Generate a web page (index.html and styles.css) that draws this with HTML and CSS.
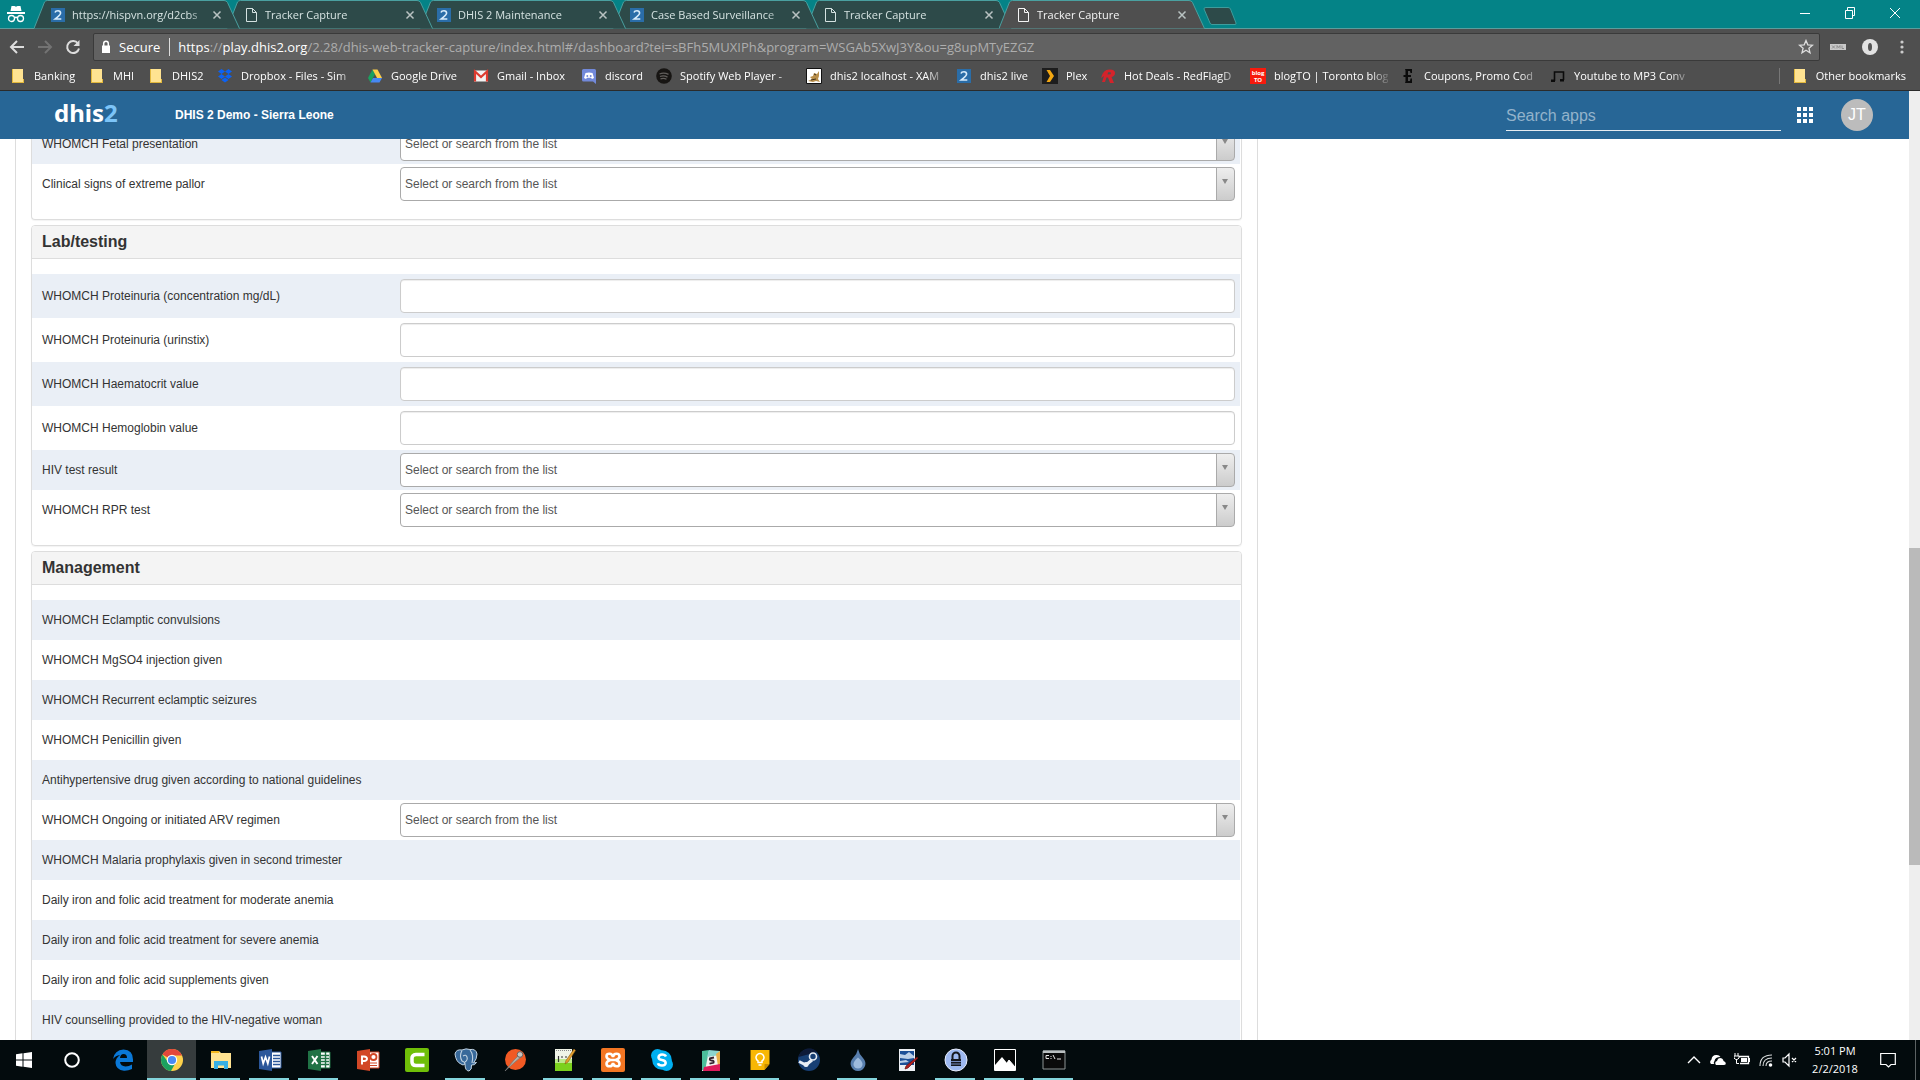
FILE: index.html
```html
<!DOCTYPE html>
<html lang="en">
<head>
<meta charset="utf-8">
<title>Tracker Capture</title>
<link rel="stylesheet" href="styles.css">
</head>
<body>
<svg class="defs" aria-hidden="true">
  <symbol id="tab-shape" viewBox="0 0 206 29" preserveAspectRatio="none"><path d="M0 28.500 L10.500 2 Q11.500 .5 13.500 .5 H190 Q192.500 .5 193.500 2.500 L205.500 28.500"/></symbol>
  <symbol id="page" viewBox="0 0 16 16"><path d="M3.500 1.500h6l4 4v9h-10zM9.500 1.500v4h4" fill="none" stroke="currentColor"/></symbol>
  <symbol id="dhis" viewBox="0 0 16 16"><path fill="#2a6da8" d="M1 1h14v14H1z"/><path d="M5 5.500Q5.500 3.800 8 3.800t2.600 2.300Q10.600 8 5.300 12h6" fill="none" stroke="#d8ecfb" stroke-width="1.600"/></symbol>
  <symbol id="folder" viewBox="0 0 16 16"><path fill="#ffe391" d="M2 1h11v10h1v4H2z"/><path fill="#e3b93d" d="M2 14h12v1H2zM13 11h1v4h-1zM2 1h1v14H2z"/></symbol>
  <symbol id="close" viewBox="0 0 10 10"><path d="M1.500 1.500l7 7M8.500 1.500l-7 7" fill="none" stroke="currentColor" stroke-width="1.500"/></symbol>
</svg>

<header class="browser">
  <div class="tabstrip">
    <svg class="incognito" viewBox="0 0 18 18" fill="#fff"><path d="M4.500 1h3l1.500.7L10.500 1h3l1 5h-11zM0 7h18v2H0z"/><g fill="none" stroke="#fff" stroke-width="1.300"><circle cx="4.500" cy="13.500" r="3"/><circle cx="13.500" cy="13.500" r="3"/><path d="M7.500 13q1.500-1.500 3 0"/></g></svg>
    <nav class="tabs">
      <button class="tab"><svg class="tab-bg"><use href="#tab-shape"/></svg><svg class="ico"><use href="#dhis"/></svg><span class="tab-title">https://hispvn.org/d2cbs</span><svg class="x"><use href="#close"/></svg></button>
      <button class="tab"><svg class="tab-bg"><use href="#tab-shape"/></svg><svg class="ico"><use href="#page"/></svg><span class="tab-title">Tracker Capture</span><svg class="x"><use href="#close"/></svg></button>
      <button class="tab"><svg class="tab-bg"><use href="#tab-shape"/></svg><svg class="ico"><use href="#dhis"/></svg><span class="tab-title">DHIS 2 Maintenance</span><svg class="x"><use href="#close"/></svg></button>
      <button class="tab"><svg class="tab-bg"><use href="#tab-shape"/></svg><svg class="ico"><use href="#dhis"/></svg><span class="tab-title">Case Based Surveillance</span><svg class="x"><use href="#close"/></svg></button>
      <button class="tab"><svg class="tab-bg"><use href="#tab-shape"/></svg><svg class="ico"><use href="#page"/></svg><span class="tab-title">Tracker Capture</span><svg class="x"><use href="#close"/></svg></button>
      <button class="tab active"><svg class="tab-bg"><use href="#tab-shape"/></svg><svg class="ico"><use href="#page"/></svg><span class="tab-title">Tracker Capture</span><svg class="x"><use href="#close"/></svg></button>
      <button class="new-tab" aria-label="New tab"><svg viewBox="0 0 34 18"><path d="M3 .5h22q2 0 2.500 1.500l5.500 14q.4 1.500-1 1.500H9q-1.500 0-2-1.500L1 2Q.6.500 3 .5z" fill="#2d4a49" stroke="#3f9c9c"/></svg></button>
    </nav>
    <div class="window-buttons">
      <button aria-label="Minimize"><svg viewBox="0 0 12 12"><path d="M1 6.500h10"/></svg></button>
      <button aria-label="Restore"><svg viewBox="0 0 12 12"><path d="M1.500 3.500h7v8h-7zM3.500 3V.5h7v8H9"/></svg></button>
      <button aria-label="Close"><svg viewBox="0 0 12 12"><path d="M1 1l10 10M11 1L1 11"/></svg></button>
    </div>
  </div>

  <div class="toolbar">
    <button aria-label="Back"><svg viewBox="0 0 16 16"><path d="M15 8H2M8 2L2 8l6 6"/></svg></button>
    <button aria-label="Forward" class="dim"><svg viewBox="0 0 16 16"><path d="M1 8h13M8 2l6 6-6 6"/></svg></button>
    <button aria-label="Reload"><svg viewBox="0 0 16 16"><path d="M13 4.500A6 6 0 1 0 14 9.500"/><path d="M14.500 1v6h-6z" fill="currentColor" stroke="none"/></svg></button>
    <div class="omnibox">
      <svg class="lock" viewBox="0 0 10 14"><path d="M1 5.500h8V13H1z" fill="#fff"/><path d="M2.700 6V3.500a2.300 2.300 0 0 1 4.600 0V6" fill="none" stroke="#fff" stroke-width="1.500"/></svg>
      <span class="secure">Secure</span>
      <span class="url"><b>https</b>://<b>play.dhis2.org</b>/2.28/dhis-web-tracker-capture/index.html#/dashboard?tei=sBFh5MUXIPh&amp;program=WSGAb5XwJ3Y&amp;ou=g8upMTyEZGZ</span>
      <svg class="star" viewBox="0 0 16 16"><path d="M8 1.500l1.800 4.300 4.700.4-3.600 3 1.100 4.600L8 11.300l-4 2.500 1.100-4.600-3.600-3 4.700-.4z" fill="none" stroke="#ddd" stroke-width="1.300"/></svg>
    </div>
    <svg class="ext" viewBox="0 0 16 16"><path fill="#c9c9c9" d="M0 5h16v6H0z"/><path d="M2 6.500l3 3M5 6.500l-3 3M7 9.500v-3l1.500 2 1.500-2v3M12 6.500v3h2" fill="none" stroke="#8e8e8e"/></svg>
    <svg class="ext" viewBox="0 0 16 16"><circle cx="8" cy="8" r="8" fill="#e2e2e2"/><ellipse cx="8" cy="8" rx="2" ry="4" fill="#555"/></svg>
    <svg class="ext" viewBox="0 0 16 16" fill="#ccc"><circle cx="8" cy="3" r="1.600"/><circle cx="8" cy="8" r="1.600"/><circle cx="8" cy="13" r="1.600"/></svg>
  </div>

  <nav class="bookmarks">
    <a href="#"><svg class="ico"><use href="#folder"/></svg><span>Banking</span></a>
    <a href="#"><svg class="ico"><use href="#folder"/></svg><span>MHI</span></a>
    <a href="#"><svg class="ico"><use href="#folder"/></svg><span>DHIS2</span></a>
    <a href="#"><svg class="ico" viewBox="0 0 16 16" fill="#0b62f5"><path d="M4.500 1L8 3.500 4.500 6 1 3.500zM11.500 1L15 3.500 11.500 6 8 3.500zM4.500 6L8 8.500 4.500 11 1 8.500zM11.500 6L15 8.500 11.500 11 8 8.500zM8 9.500l3.500 2.500L8 14.500 4.500 12z"/></svg><span>Dropbox - Files - Sim</span></a>
    <a href="#"><svg class="ico" viewBox="0 0 16 16"><path d="M5.500 1.500L8 6 3.500 14.500 1 10z" fill="#1aa15f"/><path d="M5.500 1.500h5L15 10h-5z" fill="#ffd04b"/><path d="M6 10h9l-2.500 4.500h-9z" fill="#4688f4"/></svg><span>Google Drive</span></a>
    <a href="#"><svg class="ico" viewBox="0 0 16 16"><path d="M1 2.500h14v11H1z" fill="#f2f2f2"/><path d="M2 13.500V3.500l6 5.500 6-5.500v10" fill="none" stroke="#dd3b30" stroke-width="2.200"/></svg><span>Gmail - Inbox</span></a>
    <a href="#"><svg class="ico" viewBox="0 0 16 16"><path d="M2.500 1h11Q15 1 15 2.500V16l-3-2.500H2.500Q1 13.500 1 12V2.500Q1 1 2.500 1z" fill="#7289da"/><path d="M4.500 5Q8 4 11.500 5L13 10l-2 1-1-1.200H6L5 11l-2-1z" fill="#fff"/><circle cx="6.300" cy="8" r="1" fill="#7289da"/><circle cx="9.700" cy="8" r="1" fill="#7289da"/></svg><span>discord</span></a>
    <a href="#"><svg class="ico" viewBox="0 0 16 16"><circle cx="8" cy="8" r="7.800" fill="#171513"/><path d="M3.500 6Q8 4.200 12.500 6.400M4 8.500q4-1.300 7.500.6M4.500 10.800q3.500-1 6 .5" fill="none" stroke="#625f5c" stroke-width="1.300"/></svg><span>Spotify Web Player -</span></a>
    <a href="#"><svg class="ico" viewBox="0 0 16 16"><path d="M.5.500h15v15H.5z" fill="#fff" stroke="#111"/><path d="M2 13l4-2-2-2 3-1 1-3 3 1 2-3v5l-1 3 2 3-4-1-3 1z" fill="#b98f4b"/><path d="M8 6l2 1M5 12l5-1" stroke="#3e3320"/></svg><span>dhis2 localhost - XAM</span></a>
    <a href="#"><svg class="ico"><use href="#dhis"/></svg><span>dhis2 live</span></a>
    <a href="#"><svg class="ico" viewBox="0 0 16 16"><path fill="#1d1d1d" d="M0 0h16v16H0z"/><path d="M4.500 2H8l4 6-4 6H4.500l3.500-6z" fill="#f3a712"/></svg><span>Plex</span></a>
    <a href="#"><svg class="ico" viewBox="0 0 16 16"><path d="M1 10Q3 1 10 1.500q5 0 5 3.500 0 3-3.500 4L14 15h-4L8 9.500H6.500L5 14H2l2-6z" fill="#d4232b"/><path d="M7.500 6.500l.7-2.300h2q1.500.5.300 2z" fill="#505050"/></svg><span>Hot Deals - RedFlagD</span></a>
    <a href="#"><svg class="ico blogto" viewBox="0 0 16 16"><path fill="#f71a0d" d="M0 0h16v16H0z"/><text x="8" y="7" text-anchor="middle">blog</text><text x="8" y="14" text-anchor="middle">TO</text></svg><span>blogTO | Toronto blog</span></a>
    <a href="#"><svg class="ico" viewBox="0 0 16 16"><path d="M5 1h7v4h-1.500L10 3H8v4h3v2H8v4h2l.5-2.500H12V15H5l.5-1.500V9H3.500V7h2V2.500z" fill="#0b0b0b"/></svg><span>Coupons, Promo Cod</span></a>
    <a href="#"><svg class="ico" viewBox="0 0 16 16"><path d="M4.500 13V4h9v8" fill="none" stroke="#0b0b0b" stroke-width="1.600"/><path d="M1 11.500h4V14H1zM10 11h4v2.500h-4z" fill="#0b0b0b"/></svg><span>Youtube to MP3 Conv</span></a>
    <a href="#" class="other"><svg class="ico"><use href="#folder"/></svg><span>Other bookmarks</span></a>
  </nav>
</header>

<div class="viewport">
  <div class="page">
    <header class="appbar">
      <a class="logo" href="#">dhis<span>2</span></a>
      <strong class="instance">DHIS 2 Demo - Sierra Leone</strong>
      <input class="search" type="text" placeholder="Search apps" aria-label="Search apps">
      <button class="apps" aria-label="Apps"><svg viewBox="0 0 16 16" fill="#fff"><path d="M0 0h4v4H0zM6 0h4v4H6zM12 0h4v4h-4zM0 6h4v4H0zM6 6h4v4H6zM12 6h4v4h-4zM0 12h4v4H0zM6 12h4v4H6zM12 12h4v4h-4z"/></svg></button>
      <button class="avatar">JT</button>
    </header>

    <main class="dashboard">
      <form class="widget">
        <section class="panel continued">
          <div class="row"><label for="f1">WHOMCH Fetal presentation</label><span class="pick"><select id="f1"><option>Select or search from the list</option></select></span></div>
          <div class="row"><label for="f2">Clinical signs of extreme pallor</label><span class="pick"><select id="f2"><option>Select or search from the list</option></select></span></div>
        </section>

        <section class="panel">
          <h2>Lab/testing</h2>
          <div class="row"><label for="f3">WHOMCH Proteinuria (concentration mg/dL)</label><input id="f3" type="text"></div>
          <div class="row"><label for="f4">WHOMCH Proteinuria (urinstix)</label><input id="f4" type="text"></div>
          <div class="row"><label for="f5">WHOMCH Haematocrit value</label><input id="f5" type="text"></div>
          <div class="row"><label for="f6">WHOMCH Hemoglobin value</label><input id="f6" type="text"></div>
          <div class="row"><label for="f7">HIV test result</label><span class="pick"><select id="f7"><option>Select or search from the list</option></select></span></div>
          <div class="row"><label for="f8">WHOMCH RPR test</label><span class="pick"><select id="f8"><option>Select or search from the list</option></select></span></div>
        </section>

        <section class="panel">
          <h2>Management</h2>
          <div class="row"><span>WHOMCH Eclamptic convulsions</span></div>
          <div class="row"><span>WHOMCH MgSO4 injection given</span></div>
          <div class="row"><span>WHOMCH Recurrent eclamptic seizures</span></div>
          <div class="row"><span>WHOMCH Penicillin given</span></div>
          <div class="row"><span>Antihypertensive drug given according to national guidelines</span></div>
          <div class="row"><label for="f9">WHOMCH Ongoing or initiated ARV regimen</label><span class="pick"><select id="f9"><option>Select or search from the list</option></select></span></div>
          <div class="row"><span>WHOMCH Malaria prophylaxis given in second trimester</span></div>
          <div class="row"><span>Daily iron and folic acid treatment for moderate anemia</span></div>
          <div class="row"><span>Daily iron and folic acid treatment for severe anemia</span></div>
          <div class="row"><span>Daily iron and folic acid supplements given</span></div>
          <div class="row"><span>HIV counselling provided to the HIV-negative woman</span></div>
        </section>
      </form>
    </main>
  </div>
  <div class="scrollbar"><div class="thumb"></div></div>
</div>

<footer class="taskbar">
  <button class="sys" aria-label="Start"><svg class="i16" viewBox="0 0 16 16" fill="#fff"><path d="M0 2.300L6.500 1.300V7.500H0zM7.500 1.200L16 0v7.500H7.500zM0 8.500h6.500v6.200L0 13.700zM7.500 8.500H16V16l-8.500-1.200z"/></svg></button>
  <button class="sys" aria-label="Cortana"><svg class="i16" viewBox="0 0 16 16"><circle cx="8" cy="8" r="6.800" fill="none" stroke="#fff" stroke-width="2"/></svg></button>
  <nav class="tasks">
    <button aria-label="Edge"><svg viewBox="0 0 24 24"><path d="M2 11Q3.500 2 12.500 1.500 22 2 22 11.500V14H9q.5 4 5.500 4.500 3.500 0 6.500-2v4.500q-4 2-8 1.800Q5 22 4.500 15 4.500 10 9 7q-4.500.5-7 4zM9 10h7q0-4-3.500-4Q9.500 6 9 10z" fill="#0a78d7"/></svg></button>
    <button aria-label="Chrome" class="open current"><svg viewBox="0 0 24 24"><circle cx="12" cy="12" r="11" fill="#fdd14b"/><path d="M12 12L2.500 6.500A11 11 0 0 1 22 7.500H12z" fill="#e2473b"/><path d="M2.500 6.500A11 11 0 0 0 11 23l5-9-4-2-4 2z" fill="#1ba160"/><circle cx="12" cy="12" r="5.200" fill="#fff"/><circle cx="12" cy="12" r="4.100" fill="#4a8af4"/></svg></button>
    <button aria-label="File Explorer" class="open"><svg viewBox="0 0 24 24"><path d="M2 3h8l2 2h10v15H2z" fill="#ffe391"/><path d="M2 3h8v2H2z" fill="#f4b81e"/><path d="M5 13h14v8h-4v-3.500H9V21H5z" fill="#37b0e5"/></svg></button>
    <button aria-label="Word" class="open"><svg viewBox="0 0 24 24"><path d="M13 4h10v16H13z" fill="#fff" stroke="#2b579a"/><path d="M15 7.500h7M15 10.500h7M15 13.500h7M15 16.500h7" stroke="#2b579a" stroke-width="1.500"/><path d="M1 3l13-2v22L1 21z" fill="#2b579a"/><path d="M3.500 8.500L5.200 15.500 7.500 9l2.300 6.500 1.700-7" fill="none" stroke="#fff" stroke-width="1.700"/></svg></button>
    <button aria-label="Excel" class="open"><svg viewBox="0 0 24 24"><path d="M13 4h10v16H13z" fill="#fff" stroke="#207245"/><path d="M14 7.500h8M14 10.500h8M14 13.500h8M14 16.500h8M18.500 4v16" stroke="#207245" stroke-width="1.400"/><path d="M1 3l13-2v22L1 21z" fill="#207245"/><path d="M5 8l5.500 8M10.500 8L5 16" stroke="#fff" stroke-width="1.900"/></svg></button>
    <button aria-label="PowerPoint"><svg viewBox="0 0 24 24"><path d="M13 4h10v16H13z" fill="#fff" stroke="#d24726"/><path d="M14 15h7M14 17.500h7" stroke="#d24726"/><circle cx="17.500" cy="9" r="3" fill="none" stroke="#d24726" stroke-width="1.800"/><path d="M1 3l13-2v22L1 21z" fill="#d24726"/><path d="M6 16.500V8.500h2q3 .2 3 2.300T8 13H6" fill="none" stroke="#fff" stroke-width="1.900"/></svg></button>
    <button aria-label="Camtasia"><svg viewBox="0 0 24 24"><rect width="24" height="24" rx="2" fill="#6fbf08"/><path d="M19.500 6.500H11Q7 7 7 10v4q0 3.500 4 3.500h8.500" fill="none" stroke="#fff" stroke-width="3.500"/></svg></button>
    <button aria-label="pgAdmin" class="open"><svg viewBox="0 0 24 24"><path d="M1 6Q2 1 8 2q4-2 8-.5 6-1 7 4.500 0 5-3.500 9l3-.5q-1.500 3-5 2.500Q18 22 15 23q-4 0-4-7-2 2-4 0Q2 14 1 6z" fill="#38699a" stroke="#c2d3e2"/><path d="M8 2.500Q5 8 8 13q3 1 3 3M16 2q4 5 2 13M9 8q3-2 4 1t-2 5" fill="none" stroke="#c2d3e2" stroke-width="1.100"/></svg></button>
    <button aria-label="Postman"><svg viewBox="0 0 24 24"><circle cx="12.500" cy="11.500" r="10.500" fill="#f15a24"/><path d="M2 23l9-11 5-5 2 2-6 5z" fill="#b9b0a4" stroke="#777" stroke-width=".7"/><circle cx="17" cy="6.500" r="2.800" fill="#c9c6c0" stroke="#666"/></svg></button>
    <button aria-label="Notepad++" class="open"><svg viewBox="0 0 24 24"><path d="M3 1h17v22H3z" fill="#f0f4e8"/><path d="M3 14h17v9H3z" fill="#7bd11d"/><path d="M3 11h17v4H3z" fill="#bde98b"/><path d="M6.500 8v6M9 9h2M13 9h2" stroke="#333" stroke-width="1.200"/><path d="M4 2.500h15" stroke="#888" stroke-dasharray="1 1"/><path d="M22 1l1.500 1.500L16 14l-3 2 1-3.500z" fill="#e5a030" stroke="#8a5a14" stroke-width=".6"/></svg></button>
    <button aria-label="XAMPP" class="open"><svg viewBox="0 0 24 24"><rect width="24" height="24" rx="2" fill="#f37623"/><path d="M9.500 12H14.500M9.500 12Q5.500 11 5.500 8.300T8.500 5.700 12 9q.5-3.300 3.500-3.300t3 2.600-4 3.700q4 1 4 3.700t-3 2.600T12 15q-.5 3.300-3.500 3.300t-3-2.600 4-3.700z" fill="none" stroke="#fff" stroke-width="2.600"/></svg></button>
    <button aria-label="Skype" class="open"><svg viewBox="0 0 24 24"><circle cx="7.500" cy="7.500" r="6.500" fill="#00aff0"/><circle cx="16.500" cy="16.500" r="6.500" fill="#00aff0"/><circle cx="12" cy="12" r="9.800" fill="#00aff0"/><path d="M16 8.500Q15 6.500 12 6.500t-3.500 2.700Q8.500 11.500 12 12t3.700 3Q15.500 17.500 12 17.500T8 15.300" fill="none" stroke="#fff" stroke-width="2.500"/></svg></button>
    <button aria-label="Slack" class="open"><svg viewBox="0 0 24 24"><path d="M3 3h18v20H3z" fill="#f5f5f0"/><path d="M3 3l7-1-4 21-3-1z" fill="#4bbf9b"/><path d="M10 2l11 1v4L8 9z" fill="#8bd4ce"/><path d="M17 6l4-3v14l-2 1z" fill="#e8b04b"/><path d="M5 19l16-3v7H4z" fill="#dd1b5b"/><path d="M15 9.500l-4 .8q-1 2 1.500 2.200 3 0 2 2.300l-4 .8" fill="none" stroke="#33222f" stroke-width="1.800"/></svg></button>
    <button aria-label="Keep" class="open"><svg viewBox="0 0 24 24"><path d="M2.500 2h19v14l-5 6h-14z" fill="#f8b704"/><path d="M21.500 16h-5v6z" fill="#c78d00"/><path d="M10 14.500V13a4 4 0 1 1 4 0v1.500zM10.500 17h3" fill="none" stroke="#fff" stroke-width="1.500"/></svg></button>
    <button aria-label="Steam"><svg viewBox="0 0 24 24"><circle cx="12" cy="12" r="11" fill="#173f74"/><path d="M1 12A11 11 0 0 1 20 4L1.500 9z" fill="#0d1a38"/><path d="M2 13.500l7 3.500 6-5" fill="none" stroke="#e8eef5" stroke-width="3"/><circle cx="16" cy="8.500" r="3.500" fill="none" stroke="#e8eef5" stroke-width="1.600"/><circle cx="9" cy="16.500" r="2.500" fill="#e8eef5"/></svg></button>
    <button aria-label="Drop" class="open"><svg viewBox="0 0 24 24"><path d="M12 1Q13 6 17 10q3.500 4 2 8-2 5-7 5t-7-5q-1.500-4 2-8 4-4 5-9z" fill="#587fae"/><path d="M12 9.500q5 4 4.500 7.500-1 3.500-4.500 3.500T7.500 17Q7 13.500 12 9.500z" fill="#9dbbdd"/></svg></button>
    <button aria-label="Paint"><svg viewBox="0 0 24 24"><path d="M4 1h16v22H4z" fill="#eef1f5"/><path d="M5 3h14v14H5z" fill="#1c4f97"/><path d="M5 6l5 1 4-3 5 4v2l-6 1-8-1zM5 13l6-1 3 2-9 1z" fill="#bcd0e8"/><path d="M22 9l1 1-10 10-3 1 1-3z" fill="#b12020" stroke="#601010" stroke-width=".7"/></svg></button>
    <button aria-label="KeePass" class="open"><svg viewBox="0 0 24 24"><circle cx="12" cy="12" r="11" fill="#9db8f0" stroke="#e8eefc"/><path d="M7 11h10v7H7z" fill="#15171d"/><path d="M8.500 11V8a3.500 3.500 0 0 1 7 0v3" fill="none" stroke="#15171d" stroke-width="2"/><path d="M7 13.500h10M7 16h10" stroke="#8aa7e8" stroke-width=".8"/></svg></button>
    <button aria-label="Photos" class="open"><svg viewBox="0 0 24 24"><path d="M1.500 1.500h21v21h-21z" fill="#050808" stroke="#fff"/><path d="M2 22v-5l7-8 5 6 2-2 6 6v3z" fill="#fff"/><path d="M14 15l2-3 6 7" stroke="#fff" fill="#fff"/></svg></button>
    <button aria-label="Command Prompt" class="open"><svg viewBox="0 0 24 24"><path d="M1 3h22v18H1z" fill="#0a0a0a" stroke="#8d9494"/><path d="M1 2.500h22V5H1z" fill="#b9bfc0"/><path d="M4 7.500h3M4 7.500v3h3M9 8v1M9 10v1M11 7l2 4M15 11h4" stroke="#e5e5e5" fill="none"/></svg></button>
  </nav>
  <div class="tray">
    <svg viewBox="0 0 16 16"><path d="M2 11l6-6 6 6" fill="none" stroke="#fff" stroke-width="1.400"/></svg>
    <svg viewBox="0 0 16 16" fill="#fff"><path d="M1 12Q-1 10 1.500 7.500 2 3 6 3q3-.5 4.500 2Q5 5 4.500 9 3 11 4.500 12zM6 13q-2-3 1-4 1-4 5-2.500 1.500 1 1.500 2.500 3 1 2 3.500L14 13z"/></svg>
    <svg viewBox="0 0 16 16"><path d="M5 4.500h9.500v7H6M15.500 6v4" fill="none" stroke="#fff" stroke-width="1.300"/><path d="M7 6h6v4H7z" fill="#fff"/><path d="M1 1v3M4 1v3M0 4h5v2Q4 7.500 2.500 7.500T0 6zM2.500 7v4.500H5" fill="none" stroke="#fff"/></svg>
    <svg viewBox="0 0 16 16"><path d="M2 14Q2 3 14 3M5 14q0-8 9-8M8 14q0-5 6-5" fill="none" stroke="#d9dcdc" stroke-width="1.100"/><circle cx="12.500" cy="13" r="1.800" fill="#fff"/></svg>
    <svg viewBox="0 0 16 16"><path d="M1 6h2l4-4v12l-4-4H1zM10 6l4 4M14 6l-4 4" fill="none" stroke="#fff" stroke-width="1.200"/></svg>
  </div>
  <div class="clock"><span>5:01 PM</span><span>2/2/2018</span></div>
  <button class="notify" aria-label="Notifications"><svg class="i16" viewBox="0 0 16 16"><path d="M.7 1.500h14.600v11H11L8.500 15 6 12.500H.7z" fill="none" stroke="#fff" stroke-width="1.200"/></svg></button>
</footer>
</body>
</html>
```
FILE: styles.css
```css
* { box-sizing: border-box; }

body {
  margin: 0;
  height: 100vh;
  display: flex;
  flex-direction: column;
  overflow: hidden;
  background: #fff;
  color: #333;
  font: 12px/16px "Liberation Sans", Arial, sans-serif;
}

button {
  border: 0;
  padding: 0;
  background: none;
  color: inherit;
  font: inherit;
}

a { color: inherit; text-decoration: none; }
svg { display: block; flex: none; }
.defs { position: absolute; width: 0; height: 0; }
.ico { width: 16px; height: 16px; }
.i16 { width: 16px; height: 16px; }

/* Browser frame */
.browser {
  flex: none;
  background: #4f4f4f;
  border-bottom: 1px solid #2b2b2b;
  color: #fff;
  font: 11px/16px "Open Sans", "Noto Sans", sans-serif;
}

.tabstrip {
  display: flex;
  height: 29px;
  background: #048387;
  border-bottom: 1px solid #5b9d9d;
}

.incognito { width: 18px; height: 18px; margin: 5px 9px 5px 7px; }

.tabs { display: flex; height: 29px; }

.tab {
  position: relative;
  display: flex;
  align-items: center;
  width: 206px;
  height: 29px;
  margin-right: -13px;
  padding: 0 18px 0 16px;
  color: #d5e2e1;
}

.tab:nth-child(1) { z-index: 5; }
.tab:nth-child(2) { z-index: 4; }
.tab:nth-child(3) { z-index: 3; }
.tab:nth-child(4) { z-index: 2; }
.tab:nth-child(5) { z-index: 1; }
.tab.active { z-index: 6; color: #f4f4f4; }

.tab-bg {
  position: absolute;
  inset: 0;
  z-index: -1;
  width: 100%;
  height: 100%;
  fill: #2d4a49;
  stroke: #4aa0a0;
}

.tab.active .tab-bg { fill: #4f4f4f; }

.tab-title {
  flex: 1;
  margin: 0 8px 0 6px;
  overflow: hidden;
  white-space: nowrap;
  text-align: left;
  -webkit-mask-image: linear-gradient(90deg, #000 116px, transparent 138px);
  mask-image: linear-gradient(90deg, #000 116px, transparent 138px);
}

.x { width: 10px; height: 10px; color: #b9c3c2; }

.new-tab { margin: 7px 0 0 11px; height: 18px; }
.new-tab svg { width: 34px; height: 18px; }

.window-buttons { display: flex; margin-left: auto; padding-right: 3px; }
.window-buttons button { display: grid; place-items: center; width: 45px; height: 26px; }
.window-buttons svg { width: 12px; height: 12px; fill: none; stroke: #fff; }

.toolbar {
  display: flex;
  align-items: center;
  height: 36px;
  padding: 0 10px 0 9px;
}

.toolbar button { width: 28px; color: #ddd; }
.toolbar button svg { width: 16px; height: 16px; fill: none; stroke: currentColor; stroke-width: 2; }
.toolbar button.dim { color: #737373; }

.omnibox {
  flex: 1;
  display: flex;
  align-items: center;
  height: 28px;
  margin-right: 10px;
  padding: 0 5px 0 7px;
  background: #626262;
  border: 1px solid #3a3a3a;
  border-radius: 2px;
  font-size: 13px;
  line-height: 18px;
  white-space: nowrap;
}

.lock { width: 10px; height: 14px; }
.secure { margin-left: 8px; padding-right: 9px; border-right: 1px solid #ddd; }
.url { flex: 1; margin-left: 8px; color: #adadad; }
.url b { font-weight: 400; color: #fff; }
.star { width: 16px; height: 16px; }
.ext { width: 16px; height: 16px; margin-right: 16px; }
.ext:last-child { margin-right: 0; }

.bookmarks {
  display: grid;
  grid-template-columns: 79px 59px 69px 150px 106px 108px 75px 150px 150px 86px 58px repeat(4, 150px) auto;
  align-items: center;
  height: 25px;
  padding: 0 14px 4px 10px;
}

.bookmarks a { display: flex; align-items: center; gap: 8px; padding-right: 12px; }

.bookmarks span {
  flex: 1;
  overflow: hidden;
  white-space: nowrap;
  -webkit-mask-image: linear-gradient(90deg, #000 96px, transparent 118px);
  mask-image: linear-gradient(90deg, #000 96px, transparent 118px);
}

.bookmarks .other { justify-self: end; padding: 0 0 0 12px; border-left: 1px solid #777; }
.blogto text { font: bold 6px "Open Sans", sans-serif; fill: #fff; }

/* Web page */
.viewport { flex: 1; min-height: 0; display: flex; }
.page { flex: 1; min-width: 0; display: flex; flex-direction: column; }

.appbar {
  flex: none;
  display: flex;
  align-items: center;
  height: 48px;
  padding: 0 36px 0 54px;
  background: #276696;
  color: #fff;
}

.logo { width: 121px; padding-bottom: 4px; font: bold 24px/28px "Noto Sans", "Open Sans", sans-serif; }
.logo span { color: #7cc4f8; }
.instance { font-size: 12px; }

.search {
  width: 275px;
  height: 32px;
  margin-left: auto;
  padding: 2px 0 0;
  border: 0;
  border-bottom: 1px solid #e4ebf1;
  border-radius: 0;
  background: none;
  color: #fff;
  font: 16px/20px "Liberation Sans", Arial, sans-serif;
}

.search::placeholder { color: #93b3cb; opacity: 1; }
.apps { margin: 0 28px 0 16px; }
.apps svg { width: 16px; height: 16px; }
.avatar { width: 32px; height: 32px; border-radius: 50%; background: #bcbcbc; font-size: 16px; }

.dashboard { flex: 1; min-height: 0; overflow: hidden; padding-left: 15px; }

.widget {
  width: 65.65%;
  margin-top: -15px;
  padding: 0 15px;
  border: solid #ddd;
  border-width: 0 1px;
}

.panel {
  margin-bottom: 5px;
  padding: 0 1px 15px 0;
  border: 1px solid #ddd;
  border-radius: 4px;
  box-shadow: 0 1px 1px rgba(0, 0, 0, .05);
}

.panel.continued { border-top: 0; }

.panel h2 {
  margin: 0 -1px 15px 0;
  padding: 6px 10px;
  background: #f4f4f4;
  border-bottom: 1px solid #ddd;
  border-radius: 3px 3px 0 0;
  font-size: 16px;
  line-height: 20px;
}

.row {
  display: grid;
  grid-template-columns: 358px 1fr;
  align-items: center;
  min-height: 40px;
  padding: 3px 5px 3px 10px;
}

.panel h2 ~ .row:nth-child(even),
.continued .row:nth-child(odd) { background: #eaeff6; }

.row > span:first-child { grid-column: 1 / -1; }

.row input {
  width: 100%;
  height: 34px;
  margin: 2px 0;
  padding: 0 6px;
  border: 1px solid #ccc;
  border-radius: 4px;
  box-shadow: inset 0 1px 1px rgba(0, 0, 0, .075);
  font: inherit;
}

.pick { position: relative; display: block; }

.pick select {
  display: block;
  appearance: none;
  width: 100%;
  height: 34px;
  padding: 0 24px 0 4px;
  border: 1px solid #aaa;
  border-radius: 4px;
  background: linear-gradient(#aaa, #aaa) right 17px top / 1px 100% no-repeat, linear-gradient(#eee, #ccc) right / 17px 100% no-repeat, #fff;
  color: #555;
  font: inherit;
}

.pick::after {
  content: "";
  position: absolute;
  top: 12px;
  right: 7px;
  border: solid transparent;
  border-width: 5px 3px 0;
  border-top-color: #888;
}

.scrollbar { display: flex; flex-direction: column; width: 11px; background: #eee; }
.scrollbar::before { content: ""; flex: 457; }
.scrollbar::after { content: ""; flex: 175; }
.thumb { flex: 317; background: #bababa; }

/* Desktop taskbar */
.taskbar {
  flex: none;
  display: flex;
  height: 40px;
  background: #030b0d;
  color: #fff;
}

.taskbar button { display: grid; place-items: center; }
.sys { width: 48px; }
.tasks { display: flex; margin-left: 2px; }
.tasks button { position: relative; width: 49px; }
.tasks svg { width: 24px; height: 24px; }
.tasks .current { background: #363c3d; }

.tasks .open::after {
  content: "";
  position: absolute;
  bottom: 0;
  left: 4px;
  right: 5px;
  height: 2px;
  background: #84d5dc;
}

.tasks .current::after { left: 0; right: 0; }

.tray { display: flex; align-items: center; gap: 8px; margin-left: auto; }
.tray svg { width: 16px; height: 16px; }

.clock {
  display: flex;
  flex-direction: column;
  align-items: center;
  justify-content: center;
  width: 74px;
  font: 11px/18px "Open Sans", "Noto Sans", sans-serif;
}

.taskbar .notify { width: 44px; margin-right: 4px; padding-right: 12px; border-right: 1px solid #5c6263; }
```
